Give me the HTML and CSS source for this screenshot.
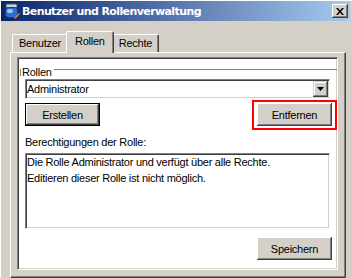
FILE: index.html
```html
<!DOCTYPE html>
<html lang="de">

<head>
    <meta charset="UTF-8">
    <title>Benutzer und Rollenverwaltung</title>
    <link rel="stylesheet" href="styles.css">
</head>

<body>
    <div class="window">
        <!-- Titelleiste -->
        <div class="titlebar">
            <svg class="app-icon" viewBox="0 0 16 16">
                <rect x="2" y="1" width="11" height="4" rx="1" fill="#c8d4e4" stroke="#40506a" stroke-width="1"/>
                <rect x="1.5" y="4.5" width="12" height="10" rx="3" fill="#2f6fd0" stroke="#1a3a80" stroke-width="1"/>
                <ellipse cx="6" cy="8" rx="3" ry="2" fill="#9cc4f4"/>
                <path d="M10 15 L15 10 L16 11 L11 16 Z" fill="#f08020"/>
                <path d="M10 15 L11 16 L9.5 16.5 Z" fill="#603010"/>
            </svg>
            <span class="title">Benutzer und Rollenverwaltung</span>
            <button class="close-btn">
                <svg width="8" height="7" viewBox="0 0 8 7">
                    <path d="M0 0 L2 0 L4 2.5 L6 0 L8 0 L5 3.5 L8 7 L6 7 L4 4.5 L2 7 L0 7 L3 3.5 Z" fill="#000"/>
                </svg>
            </button>
        </div>

        <div class="client">
            <div class="tabs">
                <div class="tab">Benutzer</div>
                <div class="tab active">Rollen</div>
                <div class="tab">Rechte</div>
            </div>

            <div class="tab-page">
                <div class="panel">
                    <div class="group">
                        <span class="group-title">Rollen</span>
                    </div>

                    <div class="combo">
                        <span class="combo-text">Administrator</span>
                        <span class="combo-btn">
                            <svg width="7" height="4" viewBox="0 0 7 4"><path d="M0 0 H7 L3.5 4 Z" fill="#000"/></svg>
                        </span>
                    </div>

                    <div class="btn-row">
                        <button class="btn default">Erstellen</button>
                        <div class="marked">
                            <button class="btn">Entfernen</button>
                        </div>
                    </div>

                    <div class="label">Berechtigungen der Rolle:</div>
                    <div class="textbox">
                        Die Rolle Administrator und verfügt über alle Rechte.<br>
                        Editieren dieser Rolle ist nicht möglich.
                    </div>

                    <div class="footer">
                        <button class="btn">Speichern</button>
                    </div>
                </div>
            </div>
        </div>
    </div>
</body>

</html>
```

FILE: styles.css
```css
body {
    margin: 0;
    background: #d4d0c8;
    font-family: "Liberation Sans", Arial, sans-serif;
    font-size: 11px;
    letter-spacing: -0.25px;
    color: #000;
}

.window {
    width: 352px;
    height: 278px;
    box-sizing: border-box;
    padding: 1px 2px 0 1px;
    background: #d4d0c8;
    box-shadow: inset 1px 1px 0 #fff;
    display: flex;
    flex-direction: column;
    overflow: hidden;
}

/* Titelleiste */
.titlebar {
    height: 20px;
    flex: none;
    display: flex;
    align-items: center;
    padding: 0 2px 0 3px;
    background: linear-gradient(to right, #0a246a, #a6caf0);
}

.app-icon {
    width: 16px;
    height: 16px;
    flex: none;
}

.title {
    flex: 1;
    margin-left: 2px;
    color: #fff;
    font-family: "DejaVu Sans", sans-serif;
    font-weight: bold;
    font-size: 11px;
    letter-spacing: -0.6px;
    white-space: nowrap;
}

.close-btn {
    width: 16px;
    height: 14px;
    padding: 0;
    border: none;
    background: #d4d0c8;
    display: flex;
    align-items: center;
    justify-content: center;
    box-shadow: inset -1px -1px #404040, inset 1px 1px #fff, inset -2px -2px #808080;
}

/* Karteireiter */
.client {
    flex: 1;
    display: flex;
    flex-direction: column;
    padding: 10px 4px 0 9px;
}

.tabs {
    height: 21px;
    flex: none;
    display: flex;
    align-items: flex-start;
    padding-left: 2px;
}

.tab {
    height: 18px;
    margin-top: 3px;
    box-sizing: border-box;
    padding: 0 6px;
    line-height: 16px;
    border-top: 1px solid #fff;
    border-left: 1px solid #fff;
    border-right: 1px solid #404040;
    border-radius: 2px 2px 0 0;
    box-shadow: inset -1px 0 #808080;
}

.tab.active {
    height: 22px;
    margin: 0 -2px 0;
    padding: 0 8px;
    line-height: 19px;
    position: relative;
    z-index: 1;
    background: #d4d0c8;
}

.tab-page {
    flex: 1;
    display: flex;
    flex-direction: column;
    border-top: 1px solid #fff;
    border-left: 1px solid #fff;
    border-right: 1px solid #404040;
    border-bottom: 1px solid #404040;
    box-shadow: inset -1px -1px #808080;
}

.panel {
    flex: 1;
    margin: 4px 7px 7px 6px;
    padding: 0 7px;
    background: #fff;
    border: 1px solid;
    border-color: #808080 #fff #fff #808080;
    box-shadow: inset 1px 1px #404040, inset -1px -1px #d4d0c8;
    display: flex;
    flex-direction: column;
}

/* Gruppe "Rollen" */
.group {
    height: 6px;
    margin: 11px -7px 0 -5px;
    border-top: 1px solid #808080;
    border-left: 1px solid #808080;
}

.group-title {
    display: block;
    width: fit-content;
    margin-top: -4px;
    padding: 0 2px 0 1px;
    line-height: 13px;
    background: #fff;
}

.combo {
    height: 20px;
    margin-top: 3px;
    box-sizing: border-box;
    padding: 1px;
    display: flex;
    align-items: center;
    background: #fff;
    border: 1px solid;
    border-color: #808080 #fff #fff #808080;
    box-shadow: inset 1px 1px #404040, inset -1px -1px #d4d0c8;
}

.combo-text {
    flex: 1;
    line-height: 16px;
}

.combo-btn {
    width: 15px;
    height: 16px;
    display: flex;
    align-items: center;
    justify-content: center;
    background: #d4d0c8;
    box-shadow: inset -1px -1px #404040, inset 1px 1px #d4d0c8, inset -2px -2px #808080, inset 2px 2px #fff;
}

/* Schaltflächen */
.btn-row {
    display: flex;
    justify-content: space-between;
    margin: 4px -2px 0 0;
}

.btn {
    width: 75px;
    height: 23px;
    padding: 0;
    border: none;
    font: inherit;
    letter-spacing: inherit;
    color: #000;
    background: #d4d0c8;
    box-shadow: inset -1px -1px #404040, inset 1px 1px #fff, inset -2px -2px #808080;
}

.btn.default {
    box-shadow: inset 0 0 0 1px #000, inset -2px -2px #404040, inset 2px 2px #fff, inset -3px -3px #808080;
}

.marked {
    position: relative;
}

/* rote Markierung */
.marked::after {
    content: "";
    position: absolute;
    left: -5px;
    right: -5px;
    top: -3px;
    bottom: -4px;
    border: 2px solid #f00;
    pointer-events: none;
}

.label {
    margin-top: 10px;
    line-height: 13px;
}

.textbox {
    height: 76px;
    margin-top: 4px;
    box-sizing: border-box;
    padding: 0 1px;
    line-height: 16px;
    background: #fff;
    border: 1px solid;
    border-color: #808080 #fff #fff #808080;
    box-shadow: inset 1px 1px #404040, inset -1px -1px #d4d0c8;
}

.footer {
    display: flex;
    justify-content: flex-end;
    margin: 8px -2px 0 0;
}
```
